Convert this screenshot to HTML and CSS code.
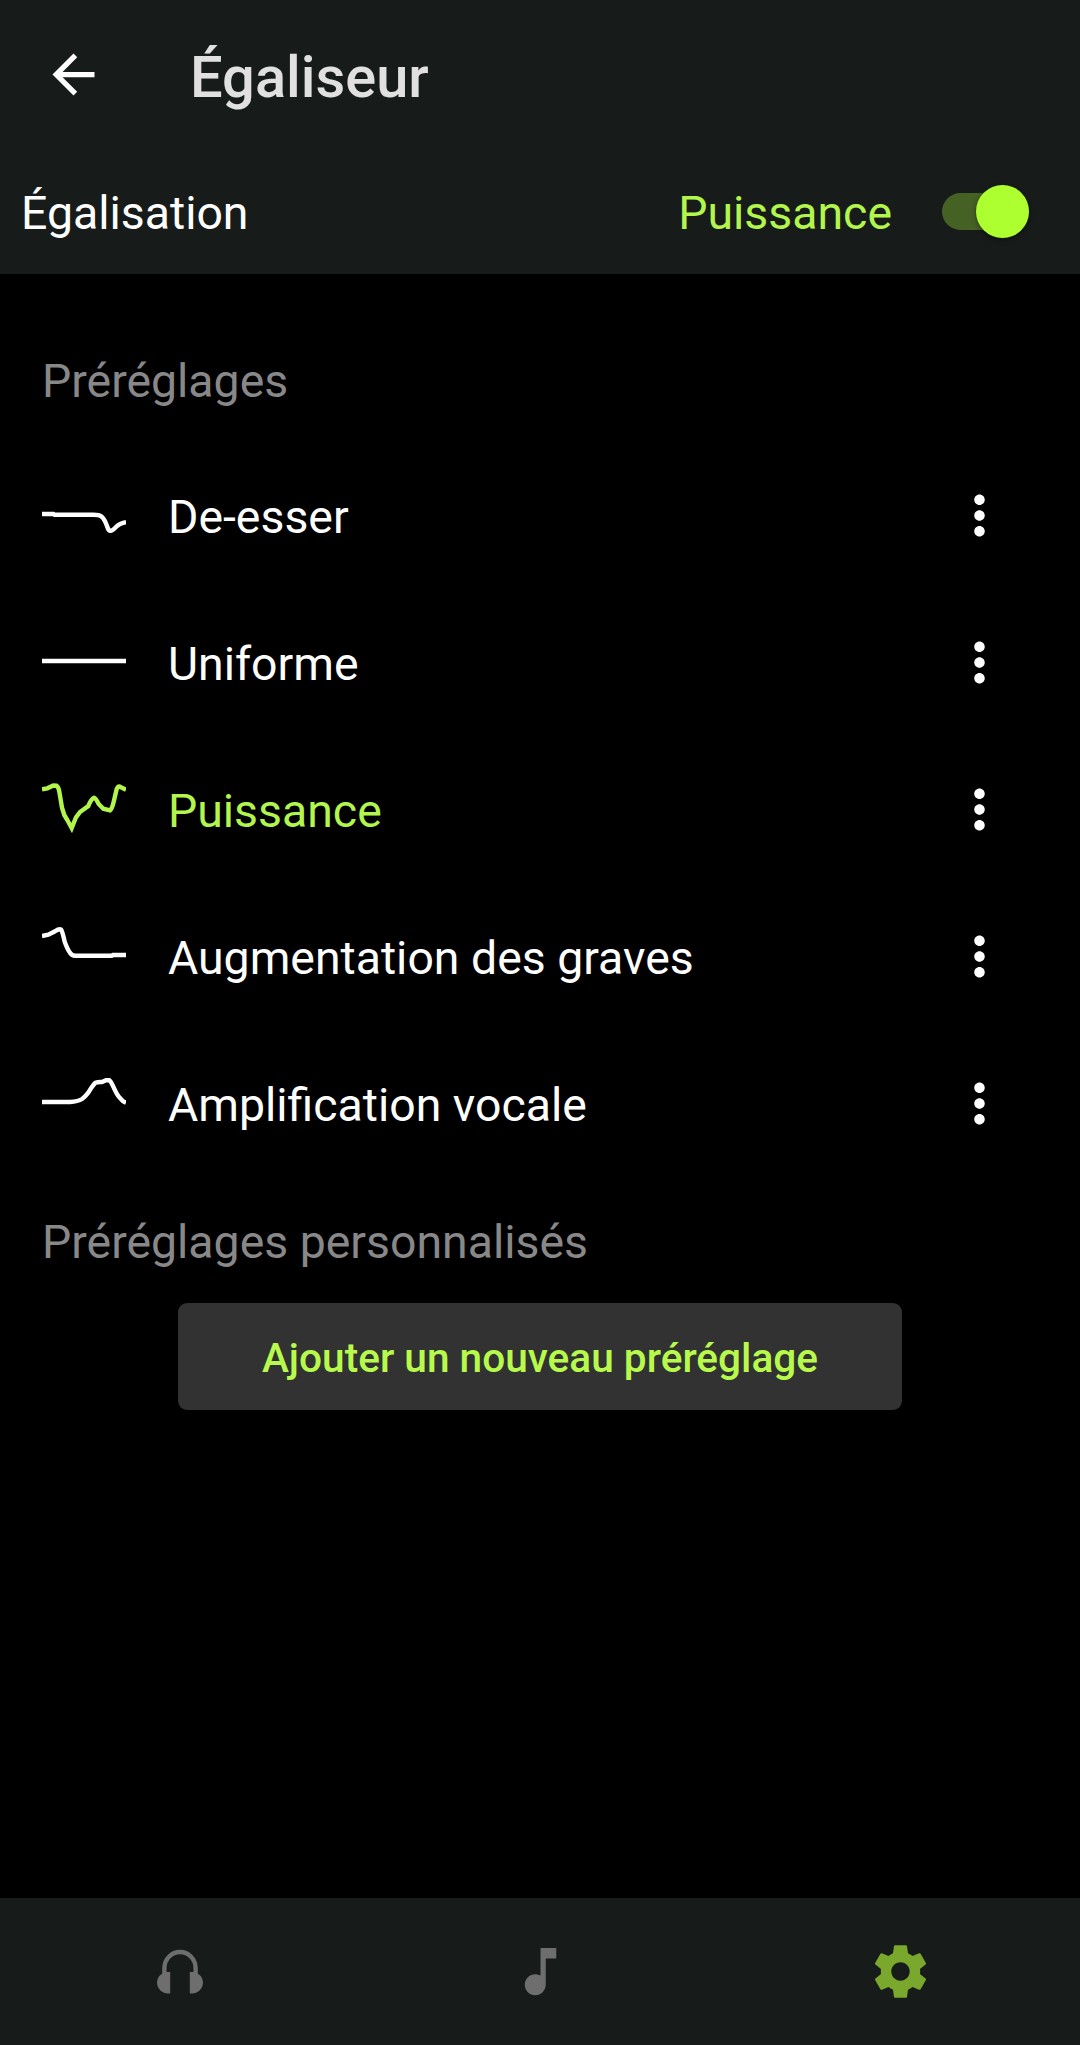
FILE: index.html
```
<!DOCTYPE html>
<html lang="fr">
<head>
  <meta charset="UTF-8">
  <meta name="viewport" content="width=device-width, initial-scale=1.0">
  <title>Égaliseur</title>
  <link rel="stylesheet" href="styles.css">
</head>
<body>
  <header class="topbar">
    <svg class="icon" viewBox="0 0 24 24"><path d="M20 11H7.83l5.59-5.59L12 4l-8 8 8 8 1.41-1.41L7.83 13H20v-2z"/></svg>
    <h1>Égaliseur</h1>
  </header>
  <div class="eq-bar">
    <span class="label">Égalisation</span>
    <span class="current">Puissance</span>
    <div class="switch"><div class="knob"></div></div>
  </div>

  <main>
    <h2>Préréglages</h2>
    <ul class="presets">
      <li>
        <svg class="curve" viewBox="0 0 84 60"><path d="M0 29H11.5L12.5 29.7H50Q57 29.5 59.5 31.5Q62.5 34 65 41Q66.5 46 68.5 45.7Q70 46 73 43Q78 38 84 37.3"/></svg>
        <span class="name">De-esser</span>
        <svg class="icon" viewBox="0 0 24 24"><use href="#more"/></svg>
      </li>
      <li>
        <svg class="curve" viewBox="0 0 84 60"><path d="M0 29H84"/></svg>
        <span class="name">Uniforme</span>
        <svg class="icon" viewBox="0 0 24 24"><use href="#more"/></svg>
      </li>
      <li class="active">
        <svg class="curve" viewBox="0 0 84 60"><path d="M0 10.3L5.3 9.3L11.3 6.5L14.5 6.7Q16.5 8 17.3 12.7L20 28.7L22.3 36L25.3 41L29.7 49L34 38.3L38 33L46.3 27Q49 20 52 18.7Q53.5 19 56.7 25L61.3 29.7L68 31.3Q70 30 71.7 22.7L74.7 10Q76 7 78 7.7L84 10.7"/></svg>
        <span class="name">Puissance</span>
        <svg class="icon" viewBox="0 0 24 24"><use href="#more"/></svg>
      </li>
      <li>
        <svg class="curve" viewBox="0 0 84 60"><path d="M0 10L6.3 8.7L13 5.3Q17 2.5 19 3.5Q20.3 5 22.7 15.7Q25.5 23.5 28 26.7Q30 29.7 33 29.7H69.7L71 29H84"/></svg>
        <span class="name">Augmentation des graves</span>
        <svg class="icon" viewBox="0 0 24 24"><use href="#more"/></svg>
      </li>
      <li>
        <svg class="curve" viewBox="0 0 84 60"><path d="M0 29H28Q36 28.5 40 26Q43 24 46.3 19.7Q51 12 53.5 9.7Q56 8.7 60 9L64 7.2L67.3 7.3Q69 8.5 71.3 13.7Q75 22 77.3 24.3L81 28.3L84 29.7"/></svg>
        <span class="name">Amplification vocale</span>
        <svg class="icon" viewBox="0 0 24 24"><use href="#more"/></svg>
      </li>
    </ul>
    <h2 class="custom">Préréglages personnalisés</h2>
    <button class="add">Ajouter un nouveau préréglage</button>
  </main>

  <nav class="tabs">
    <div class="tab">
      <svg class="icon" viewBox="0 0 63 63"><path d="M15.4 32.5V28a15.6 16 0 0 1 31.2 0V32.5" fill="none" stroke="currentColor" stroke-width="4.4"/><path d="M21.2 32V53.6H18.3a11 10.9 0 0 1-5-20.2V32zM40.8 32V53.6H43.7a11 10.9 0 0 0 5-20.2V32z"/></svg>
    </div>
    <div class="tab">
      <svg class="icon" viewBox="0 0 24 24"><path d="M12 3v10.55c-.59-.34-1.27-.55-2-.55-2.21 0-4 1.79-4 4s1.79 4 4 4 4-1.79 4-4V7h4V3h-6z"/></svg>
    </div>
    <div class="tab selected">
      <svg class="icon" viewBox="0 0 24 24"><path d="M19.43 12.98c.04-.32.07-.64.07-.98s-.03-.66-.07-.98l2.11-1.65c.19-.15.24-.42.12-.64l-2-3.46c-.12-.22-.39-.3-.61-.22l-2.49 1c-.52-.4-1.08-.73-1.69-.98l-.38-2.65C14.46 2.18 14.25 2 14 2h-4c-.25 0-.46.18-.49.42l-.38 2.65c-.61.25-1.17.59-1.69.98l-2.49-1c-.23-.09-.49 0-.61.22l-2 3.46c-.13.22-.07.49.12.64l2.11 1.65c-.04.32-.07.65-.07.98s.03.66.07.98l-2.11 1.65c-.19.15-.24.42-.12.64l2 3.46c.12.22.39.3.61.22l2.49-1c.52.4 1.08.73 1.69.98l.38 2.65c.03.24.24.42.49.42h4c.25 0 .46-.18.49-.42l.38-2.65c.61-.25 1.17-.59 1.69-.98l2.49 1c.23.09.49 0 .61-.22l2-3.46c.12-.22.07-.49-.12-.64l-2.11-1.65zM12 15.5c-1.93 0-3.5-1.57-3.5-3.5s1.57-3.5 3.5-3.5 3.5 1.57 3.5 3.5-1.57 3.5-3.5 3.5z"/></svg>
    </div>
  </nav>

  <svg width="0" height="0" style="display: none">
    <symbol id="more" viewBox="0 0 24 24"><path d="M12 8c1.1 0 2-.9 2-2s-.9-2-2-2-2 .9-2 2 .9 2 2 2zm0 2c-1.1 0-2 .9-2 2s.9 2 2 2 2-.9 2-2-.9-2-2-2zm0 6c-1.1 0-2 .9-2 2s.9 2 2 2 2-.9 2-2-.9-2-2-2z"/></symbol>
  </svg>
</body>
</html>
```
FILE: styles.css
```
* {
  box-sizing: border-box;
}
body {
  margin: 0;
  height: 2045px;
  font-family: Roboto, sans-serif;
  font-size: 46.4px;
  background: #000;
  color: #fff;
  display: flex;
  flex-direction: column;
}
.icon {
  width: 63px;
  height: 63px;
  fill: currentColor;
  flex: none;
}
.topbar {
  height: 147px;
  padding: 1px 0 0 42px;
  display: flex;
  align-items: center;
  gap: 85px;
  background: #171b1a;
}
h1 {
  margin: 0;
  padding-top: 5px;
  font-size: 57.8px;
  font-weight: 500;
  color: #e0e0e0;
}
.eq-bar {
  height: 127px;
  padding: 0 51px 0 21px;
  display: flex;
  align-items: center;
  background: #171b1a;
}
.label,
.current {
  padding-top: 5px;
}
.current {
  margin-left: auto;
  color: #b2f54c;
}
.switch {
  width: 87px;
  height: 37px;
  margin-left: 50px;
  margin-top: 1px;
  display: flex;
  align-items: center;
  justify-content: flex-end;
  border-radius: 19px;
  background: #466124;
}
.knob {
  width: 53px;
  height: 53px;
  flex: none;
  border-radius: 50%;
  background: #adff2f;
  box-shadow: 0 2px 5px rgba(0, 0, 0, 0.4);
}
main {
  flex: 1;
  display: flex;
  flex-direction: column;
}
h2 {
  margin: 0;
  padding: 80px 42px 0;
  height: 167px;
  font-size: 46.4px;
  line-height: 54px;
  font-weight: 400;
  color: #888;
}
h2.custom {
  padding-top: 39px;
  height: 127px;
}
.presets {
  margin: 0;
  padding: 0;
  list-style: none;
}
.presets li {
  height: 147px;
  padding: 1px 69px 0 42px;
  display: flex;
  align-items: center;
}
.curve {
  width: 84px;
  height: 60px;
  margin-right: 42px;
  fill: none;
  stroke: currentColor;
  stroke-width: 4.4;
}
.name {
  flex: 1;
  padding-top: 3px;
}
.active .curve,
.active .name {
  color: #b2f54c;
}
.add {
  width: 724px;
  height: 107px;
  align-self: center;
  padding: 3px 0 0;
  border: none;
  border-radius: 9px;
  background: #323232;
  color: #b8fa4c;
  font-family: inherit;
  font-size: 40.6px;
  font-weight: 500;
}
.tabs {
  height: 147px;
  display: flex;
  background: #171b1a;
}
.tab {
  flex: 1;
  display: flex;
  align-items: center;
  justify-content: center;
  color: #6d6e6d;
}
.tab.selected {
  color: #79a82c;
}
```
